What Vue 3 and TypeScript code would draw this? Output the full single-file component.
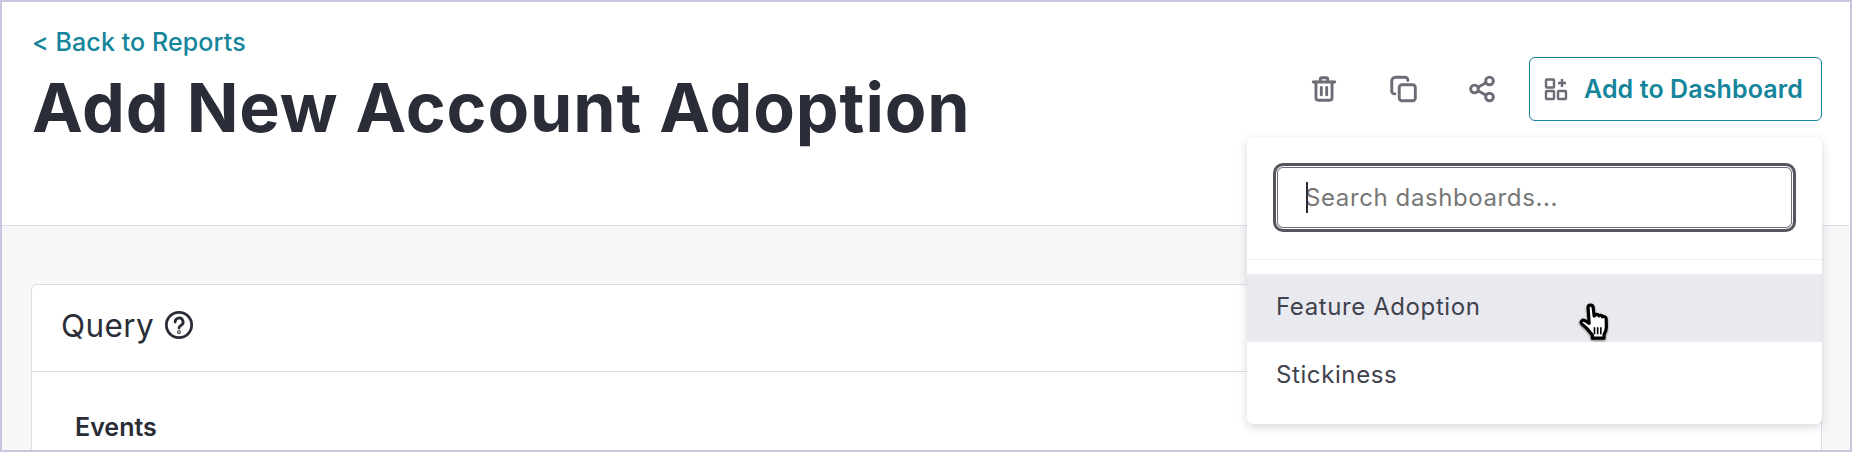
<script setup lang="ts">
const dashboards = ["Feature Adoption", "Stickiness"];
</script>

<template>
  <div class="frame">
    <header class="top">
      <div class="titles">
        <a class="back">&lt; Back to Reports</a>
        <h1>Add New Account Adoption</h1>
      </div>
      <div class="actions">
        <button class="icon-btn" aria-label="Delete">
          <svg width="30" height="30" viewBox="0 0 28 28" fill="none" stroke="#6b6c76" stroke-width="2.7" stroke-linecap="round" stroke-linejoin="round">
            <path d="M4 7.500h20" />
            <path d="M10.500 7V5a1.500 1.500 0 0 1 1.500-1.500h4A1.500 1.500 0 0 1 17.500 5v2" />
            <path d="M6.500 7.500v15a2 2 0 0 0 2 2h11a2 2 0 0 0 2-2v-15" />
            <path d="M11.500 12.500v7M16.500 12.500v7" />
          </svg>
        </button>
        <button class="icon-btn" aria-label="Duplicate">
          <svg width="30" height="30" viewBox="0 0 28 28" fill="none" stroke="#6b6c76" stroke-width="2.7" stroke-linecap="round" stroke-linejoin="round">
            <rect x="10.500" y="10" width="15" height="15" rx="2.500" />
            <path d="M18.500 6V5.500a2.500 2.500 0 0 0-2.500-2.500H7a3.500 3.500 0 0 0-3.500 3.500V16a2.500 2.500 0 0 0 2.500 2.500h.5" />
          </svg>
        </button>
        <button class="icon-btn" aria-label="Share">
          <svg width="30" height="30" viewBox="0 0 28 28" fill="none" stroke="#6b6c76" stroke-width="2.700">
            <circle cx="7" cy="14" r="3.600" />
            <circle cx="21" cy="6.500" r="3.600" />
            <circle cx="21" cy="21.500" r="3.600" />
            <path d="M10.200 12.300l7.600-4.100M10.200 15.700l7.600 4.100" />
          </svg>
        </button>
        <button class="add-btn">
          <svg width="24" height="24" viewBox="0 0 24 24" fill="none" stroke="#6b6c76" stroke-width="2.400">
            <rect x="2" y="2.500" width="8" height="8" rx="0.800" />
            <rect x="2" y="14" width="8" height="8" rx="0.800" />
            <rect x="14" y="14" width="8" height="8" rx="0.800" />
            <path d="M18 2v8M14 6h8" />
          </svg>
          <span>Add to Dashboard</span>
        </button>
      </div>
    </header>

    <main class="body">
      <section class="card">
        <div class="card-head">
          <span>Query</span>
          <svg width="30" height="30" viewBox="0 0 28 28" fill="none" stroke="#2a2d37" stroke-width="2.600" stroke-linecap="round">
            <circle cx="14" cy="14" r="11.800" />
            <path d="M10.400 11.200a3.700 3.700 0 1 1 5.600 3.100c-1.200.8-2 1.300-2 2.600" />
            <circle cx="14" cy="20.600" r="0.500" />
          </svg>
        </div>
        <div class="card-body">
          <h2>Events</h2>
        </div>
      </section>
    </main>

    <div class="menu">
      <div class="search-wrap">
        <div class="search">
          <i class="caret"></i>
          <input type="text" placeholder="Search dashboards..." />
        </div>
      </div>
      <ul>
        <li v-for="(name, i) in dashboards" :key="name" :class="{ hover: i === 0 }">{{ name }}</li>
      </ul>
    </div>

    <svg class="hand" width="34" height="42" viewBox="0 0 32 38">
      <path d="M9.500 4.500c0-3 4.500-3 4.800 0l.9 8 1.200-1.200c1.200-.9 3-.4 3.300 1 .9-1 3-.7 3.300.9 1.200-.9 3.200-.2 3.500 1.600l.2 8c0 3.500-1 5-2.200 7v3.500H13.500v-3c-1.500-1.500-3.500-4.500-5.500-6.500l-4.500-4c-1.500-1.800.5-4.500 3-3l4 2.500z"
        fill="#fff" stroke="#000" stroke-width="3" stroke-linejoin="round" />
      <path d="M15.500 23v6.500M18.500 23v6.500M21.500 23v6.500" stroke="#000" stroke-width="1.500" />
    </svg>
  </div>
</template>

<style>
html,
body {
  margin: 0;
  background: #fff;
}
</style>

<style scoped>
* {
  box-sizing: border-box;
}
.frame {
  position: relative;
  width: 1852px;
  height: 452px;
  overflow: hidden;
  border: 2px solid #c9c6e0;
  font-family: Inter, "Liberation Sans", sans-serif;
  color: #2a2d37;
  background: #f7f7f8;
}
.top {
  display: flex;
  justify-content: space-between;
  height: 224px;
  padding: 25px 28px 0 30px;
  background: #fff;
  border-bottom: 1px solid #dcdbe8;
}
.back {
  display: block;
  color: #14859a;
  font-size: 25px;
  font-weight: 550;
  line-height: 30px;
  letter-spacing: 0.1px;
}
h1 {
  margin: 10px 0 0;
  font-size: 68px;
  font-weight: 700;
  line-height: 80px;
  letter-spacing: 0.9px;
}
.actions {
  display: flex;
  align-items: center;
  align-self: flex-start;
  margin-top: 30px;
}
.icon-btn {
  display: flex;
  align-items: center;
  justify-content: center;
  width: 79px;
  height: 63px;
  padding: 0;
  border: 0;
  background: none;
}
.add-btn {
  display: flex;
  align-items: center;
  gap: 16px;
  width: 293px;
  height: 64px;
  margin-left: 8px;
  padding: 0 14px;
  border: 1.5px solid #14859a;
  border-radius: 6px;
  background: #fff;
  color: #14859a;
  font-family: inherit;
  font-size: 25px;
  font-weight: 600;
  letter-spacing: 0.1px;
  white-space: nowrap;
}
.body {
  padding: 58px 28px 0 29px;
}
.card {
  background: #fff;
  border: 1px solid #dcdbe8;
  border-radius: 6px;
}
.card-head {
  display: flex;
  align-items: center;
  gap: 10px;
  height: 87px;
  padding: 0 29px 6px;
  border-bottom: 1px solid #dcdbe8;
  font-size: 31.500px;
  letter-spacing: 0.4px;
}
.card-body {
  padding: 41px 43px;
}
h2 {
  margin: 0;
  font-size: 25px;
  font-weight: 600;
  line-height: 28px;
}
.menu {
  position: absolute;
  top: 135px;
  left: 1245px;
  width: 575px;
  height: 287px;
  background: #fff;
  border-radius: 6px;
  box-shadow: 0 3px 10px rgba(40, 40, 70, 0.18);
}
.search-wrap {
  height: 123px;
  padding: 26px;
  border-bottom: 1px solid #f0f0f4;
}
.search {
  position: relative;
  height: 69px;
  border: 3px solid #55565f;
  border-radius: 10px;
  box-shadow: inset 0 0 0 1px #fff, inset 0 0 0 2px #6d6e78;
}
.search input {
  width: 100%;
  height: 100%;
  padding: 0 29px;
  border: 0;
  outline: 0;
  background: none;
  caret-color: transparent;
  font-family: inherit;
  font-size: 24px;
  letter-spacing: 0.6px;
}
.search input::placeholder {
  color: #777;
  opacity: 1;
}
.caret {
  position: absolute;
  top: 16px;
  left: 30px;
  width: 2px;
  height: 31px;
  background: #2a2d37;
}
ul {
  margin: 14px 0 0;
  padding: 0;
  list-style: none;
}
li {
  height: 68px;
  padding: 0 29px;
  font-size: 24px;
  line-height: 66px;
  letter-spacing: 0.6px;
  color: #40424d;
}
li.hover {
  background: #e9eaef;
}
.hand {
  position: absolute;
  top: 300px;
  left: 1576px;
  filter: drop-shadow(0 1px 1px rgba(0, 0, 0, 0.5));
}
</style>
